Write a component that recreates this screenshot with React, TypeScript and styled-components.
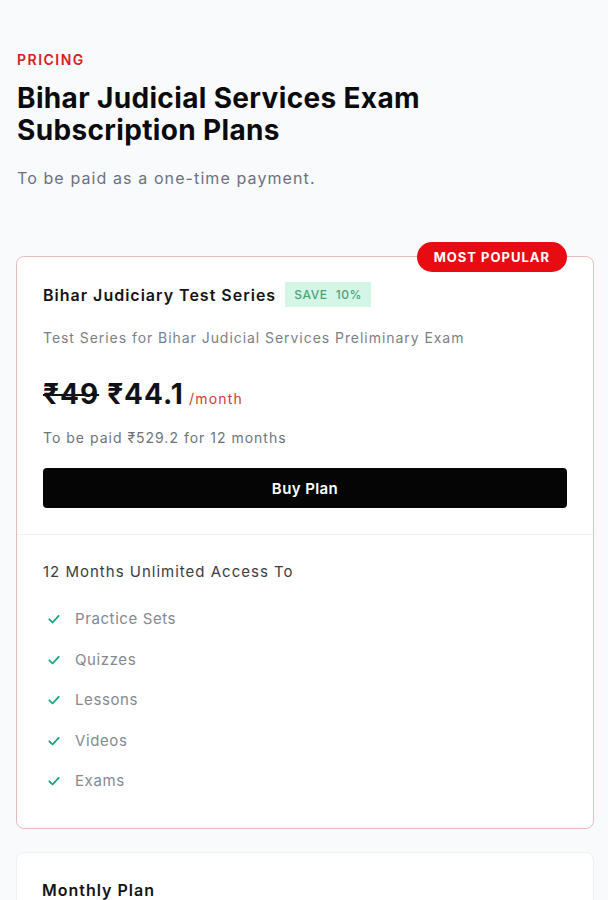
import { FC } from "react";
import styled, { createGlobalStyle } from "styled-components";

const GlobalStyle = createGlobalStyle`
  body {
    margin: 0;
    background-color: #f9fafb;
    font-family: Inter, "Noto Sans", "DejaVu Sans", sans-serif;
    color: #111827;
  }
`;

const Page = styled.main`
  padding: 50px 14px 40px 17px;
`;

const Eyebrow = styled.p`
  margin: 0;
  font-size: 14px;
  line-height: 20px;
  font-weight: 600;
  letter-spacing: 1.5px;
  color: #d62020;
`;

const Title = styled.h1`
  margin: 12px 0 0;
  font-size: 28px;
  line-height: 32px;
  font-weight: 700;
  letter-spacing: 0.35px;
  color: #0b0b0f;
`;

const Subtitle = styled.p`
  margin: 20px 0 0;
  font-size: 16px;
  line-height: 24px;
  letter-spacing: 1.1px;
  color: #6b7280;
`;

const Plans = styled.div`
  margin-top: 66px;
  display: flex;
  flex-direction: column;
  gap: 23px;
  margin-left: -1px;
`;

const Card = styled.section<{ $popular?: boolean }>`
  position: relative;
  background: #fff;
  border: 1px solid ${(p) => (p.$popular ? "#e6bcc0" : "#eef0f3")};
  border-radius: 8px;
`;

const Ribbon = styled.span`
  position: absolute;
  top: -15px;
  right: 26px;
  height: 30px;
  padding: 0 17px;
  display: flex;
  align-items: center;
  border-radius: 999px;
  background: #e80b12;
  color: #fff;
  font-size: 13px;
  font-weight: 700;
  letter-spacing: 1px;
`;

const Top = styled.div`
  padding: 25px 26px 26px;
  border-bottom: 1px solid #f0f1f3;
`;

const NameRow = styled.div`
  display: flex;
  align-items: center;
  gap: 9px;
`;

const PlanName = styled.h2`
  margin: 0;
  font-size: 16px;
  line-height: 24px;
  font-weight: 600;
  letter-spacing: 1px;
  color: #141414;
`;

const SaveTag = styled.span`
  padding: 0 9px;
  height: 25px;
  display: inline-flex;
  align-items: center;
  gap: 8px;
  background: #d4f6e6;
  color: #4aa47a;
  font-size: 12px;
  font-weight: 500;
  letter-spacing: 0.6px;
`;

const Description = styled.p`
  margin: 21px 0 0;
  font-size: 14px;
  line-height: 20px;
  letter-spacing: 0.95px;
  color: #7b7f87;
`;

const PriceRow = styled.div`
  margin-top: 28px;
  display: flex;
  align-items: baseline;
  gap: 8px;
  line-height: 36px;
`;

const Price = styled.span<{ $old?: boolean }>`
  font-size: 28px;
  font-weight: 700;
  letter-spacing: 1px;
  color: #111218;
  text-decoration: ${(p) => (p.$old ? "line-through" : "none")};
  text-decoration-thickness: 2px;
`;

const Per = styled.span`
  font-size: 14px;
  letter-spacing: 1.2px;
  color: #cf3a3a;
  margin-left: -3px;
`;

const Note = styled.p`
  margin: 11px 0 0;
  font-size: 14px;
  line-height: 20px;
  letter-spacing: 1px;
  color: #6f737b;
`;

const BuyButton = styled.button`
  margin-top: 20px;
  width: 100%;
  height: 40px;
  border: none;
  border-radius: 4px;
  background: #050505;
  color: #fff;
  font-family: inherit;
  font-size: 15px;
  font-weight: 600;
  letter-spacing: 0.4px;
  cursor: pointer;
`;

const Features = styled.div`
  padding: 25px 26px 35px;
`;

const FeaturesTitle = styled.p`
  margin: 0;
  font-size: 15px;
  line-height: 24px;
  letter-spacing: 1px;
  color: #3a3d44;
`;

const FeatureList = styled.ul`
  list-style: none;
  margin: 23px 0 0;
  padding: 0 0 0 4px;
  display: flex;
  flex-direction: column;
  gap: 16.5px;
`;

const Feature = styled.li`
  display: flex;
  align-items: center;
  gap: 14px;
  font-size: 15px;
  line-height: 24px;
  letter-spacing: 0.6px;
  color: #858991;
`;

const Check: FC = () => (
  <svg width="14" height="14" viewBox="0 0 24 24" fill="none" stroke="#16a37a" strokeWidth="3" strokeLinecap="round" strokeLinejoin="round">
    <polyline points="4 12.5 9.5 18 20 6.5" />
  </svg>
);

const SimpleTop = styled.div`
  padding: 25px 25px;
`;

const features = ["Practice Sets", "Quizzes", "Lessons", "Videos", "Exams"];

const App: FC = () => (
  <>
    <GlobalStyle />
    <Page>
      <Eyebrow>PRICING</Eyebrow>
      <Title>
        Bihar Judicial Services Exam
        <br />
        Subscription Plans
      </Title>
      <Subtitle>To be paid as a one-time payment.</Subtitle>

      <Plans>
        <Card $popular>
          <Ribbon>MOST POPULAR</Ribbon>
          <Top>
            <NameRow>
              <PlanName>Bihar Judiciary Test Series</PlanName>
              <SaveTag>
                <span>SAVE</span>
                <span>10%</span>
              </SaveTag>
            </NameRow>
            <Description>Test Series for Bihar Judicial Services Preliminary Exam</Description>
            <PriceRow>
              <Price $old>₹49</Price>
              <Price>₹44.1</Price>
              <Per>/month</Per>
            </PriceRow>
            <Note>To be paid ₹529.2 for 12 months</Note>
            <BuyButton>Buy Plan</BuyButton>
          </Top>
          <Features>
            <FeaturesTitle>12 Months Unlimited Access To</FeaturesTitle>
            <FeatureList>
              {features.map((f) => (
                <Feature key={f}>
                  <Check />
                  {f}
                </Feature>
              ))}
            </FeatureList>
          </Features>
        </Card>

        <Card>
          <SimpleTop>
            <PlanName>Monthly Plan</PlanName>
          </SimpleTop>
        </Card>
      </Plans>
    </Page>
  </>
);

export default App;
